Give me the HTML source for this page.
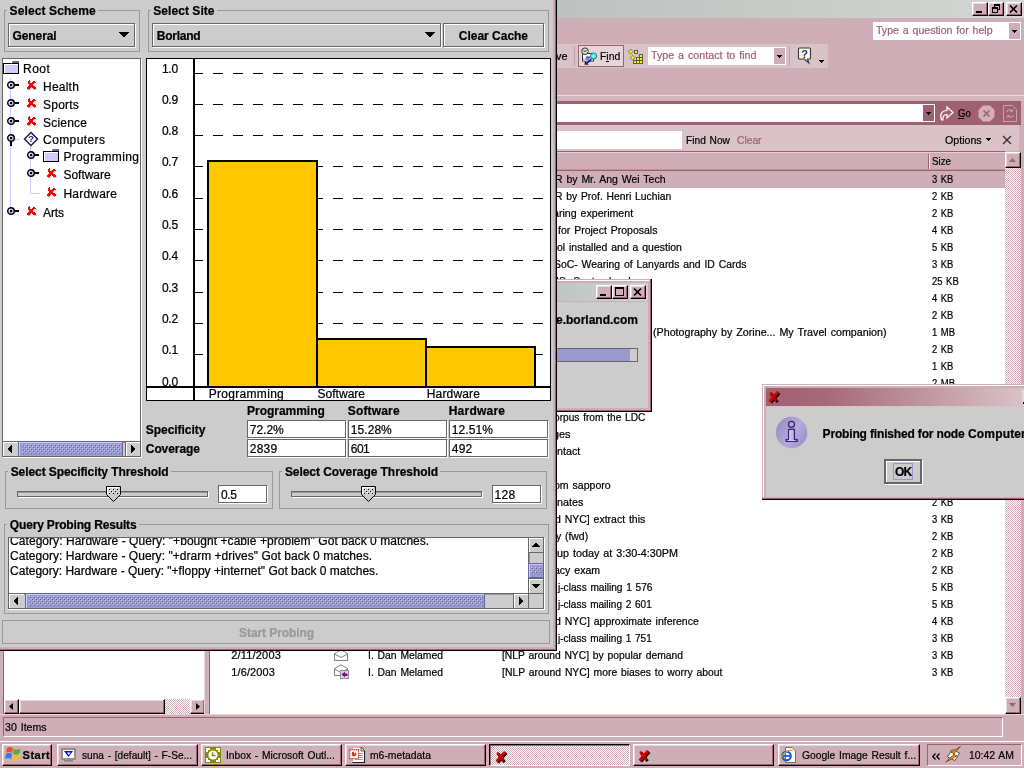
<!DOCTYPE html>
<html><head><meta charset="utf-8"><title>screen</title><style>html,body{margin:0;padding:0;width:1024px;height:768px;overflow:hidden;background:#fff}body{font-family:"Liberation Sans",sans-serif;font-size:12px;color:#000;position:relative}div,svg{position:absolute;white-space:nowrap}svg{overflow:visible;display:block}#scr{-webkit-text-stroke:0.22px currentColor}</style></head><body><div id="scr" style="left:0;top:0;width:1024px;height:768px;overflow:hidden;will-change:transform"><div id="ol" style="left:0;top:0;width:1024px;height:768px;overflow:hidden"><div style="left:0px;top:0px;width:1024px;height:741px;background:#cfafb7;"></div><div style="left:0px;top:0px;width:1024px;height:18px;background:#c6cac7;background:linear-gradient(90deg,#a0a4a2 0,#bcc2bf 557px,#d3d6d3 1024px);"></div><div style="left:972px;top:2px;width:16px;height:14px;background:#cfafb7;box-sizing:border-box;border:1px solid;border-color:#fff #000 #000 #fff;box-shadow:inset -1px -1px 0 #9f6070,inset 1px 1px 0 #e7d7db;"></div><div style="left:976px;top:11px;width:6px;height:2px;background:#000;"></div><div style="left:988px;top:2px;width:16px;height:14px;background:#cfafb7;box-sizing:border-box;border:1px solid;border-color:#fff #000 #000 #fff;box-shadow:inset -1px -1px 0 #9f6070,inset 1px 1px 0 #e7d7db;"></div><div style="left:994px;top:4px;width:6px;height:6px;background:transparent;box-sizing:border-box;border:1px solid #000;border-top-width:2px;"></div><div style="left:992px;top:7px;width:6px;height:6px;background:#cfafb7;box-sizing:border-box;border:1px solid #000;border-top-width:2px;"></div><div style="left:1006px;top:2px;width:16px;height:14px;background:#cfafb7;box-sizing:border-box;border:1px solid;border-color:#fff #000 #000 #fff;box-shadow:inset -1px -1px 0 #9f6070,inset 1px 1px 0 #e7d7db;"></div><svg style="left:1009px;top:4px" width="10" height="10"><path d="M1,1.5 L8,8.5 M8,1.5 L1,8.5" stroke="#000" stroke-width="1.7" fill="none"/></svg><div style="left:873px;top:22px;width:148px;height:18px;background:#fff;"></div><div style="left:876.1px;top:24px;font-size:11px;line-height:12px;color:#9f6070;word-spacing:1.0px;transform:scaleX(0.9595);transform-origin:0 0;">Type a question for help</div><div style="left:1009px;top:23px;width:11px;height:16px;background:#cfafb7;"></div><div style="left:1012px;top:30px;width:5px;height:1px;background:#000;"></div><div style="left:1013px;top:31px;width:3px;height:1px;background:#000;"></div><div style="left:1014px;top:32px;width:1px;height:1px;background:#000;"></div><div style="left:0px;top:44px;width:828px;height:24px;background:#d9c3c9;border-radius:0 3px 3px 0;"></div><div style="left:541.0px;top:50px;font-size:11px;line-height:12px;word-spacing:1.0px;transform:scaleX(0.9889);transform-origin:0 0;">Move</div><div style="left:574px;top:46px;width:1px;height:20px;background:#c49ba7;"></div><div style="left:578px;top:45px;width:46px;height:22px;background:#e6d6da;box-sizing:border-box;border:1px solid #9f6070;"></div><svg style="left:580px;top:46px" width="20" height="20"><rect x="2.5" y="7.5" width="11" height="7.5" fill="#f4f4f4" stroke="#303030" stroke-width="1"/><rect x="3" y="12" width="10" height="3" fill="#c8c8c8"/><circle cx="5" cy="5.2" r="3.3" fill="#dcdcdc" stroke="#303030" stroke-width="1"/><path d="M3.6,4.2 L5,5.8 L6.6,4" stroke="#202020" stroke-width="0.9" fill="none"/><rect x="3" y="5.6" width="1" height="1" fill="#f0e000"/><rect x="6.2" y="4.6" width="1" height="1" fill="#f0e000"/><path d="M6,11.2 H10.5 M6,13 H9" stroke="#2030c0" stroke-width="1.2"/><path d="M10.5,13 L6.5,16.8 L5.2,15.2 L4.8,18.6 L8.4,18.4 L7.4,17.4 L11.6,14 Z" fill="#0010e0" stroke="#000" stroke-width="0.4"/><circle cx="13.6" cy="10" r="3.1" fill="#38d8e8" stroke="#108090" stroke-width="0.9"/><path d="M11.4,10 H15.8 M13.6,7.6 V12.4" stroke="#e8ffff" stroke-width="0.7"/></svg><div style="left:599.8px;top:50px;font-size:11px;line-height:12px;word-spacing:1.0px;transform:scaleX(0.9483);transform-origin:0 0;">Find</div><div style="left:606px;top:61px;width:3px;height:1px;background:#000;"></div><svg style="left:627px;top:48px" width="18" height="18"><g fill="#f4ec30" stroke="#505038" stroke-width="0.9" shape-rendering="crispEdges"><rect x="12.5" y="6.5" width="3" height="3"/><rect x="12.5" y="9.5" width="3" height="3"/><rect x="12.5" y="12.5" width="3" height="3"/><rect x="9.5" y="9.5" width="3" height="3"/><rect x="9.5" y="12.5" width="3" height="3"/><rect x="6.5" y="12.5" width="3" height="3"/><rect x="7.5" y="2.5" width="3" height="3"/></g><g fill="#f4ec30" stroke="#505038" stroke-width="0.7"><polygon points="3.6,1.2 6,3.6 3.6,6 1.2,3.6"/><polygon points="5.5,7.2 7.9,9.6 5.5,12 3.1,9.6"/></g></svg><div style="left:648px;top:47px;width:138px;height:18px;background:#fff;"></div><div style="left:651.1px;top:49px;font-size:11px;line-height:12px;color:#9f6070;word-spacing:1.0px;transform:scaleX(0.9717);transform-origin:0 0;">Type a contact to find</div><div style="left:774px;top:48px;width:11px;height:16px;background:#cfafb7;"></div><div style="left:777px;top:55px;width:5px;height:1px;background:#000;"></div><div style="left:778px;top:56px;width:3px;height:1px;background:#000;"></div><div style="left:779px;top:57px;width:1px;height:1px;background:#000;"></div><div style="left:789px;top:46px;width:1px;height:20px;background:#c49ba7;"></div><svg style="left:797px;top:47px" width="16" height="18"><path d="M2.5,1 H12.5 Q13.5,1 13.5,2 V11 Q13.5,12 12.5,12 H10.5 L11.8,16 L7.5,12 H2.5 Q1.5,12 1.5,11 V2 Q1.5,1 2.5,1 Z" fill="#fbfbd8" stroke="#303838" stroke-width="1.1"/><text x="7.6" y="10.6" font-family="Liberation Sans" font-weight="bold" font-size="11" fill="#2828a8" text-anchor="middle">?</text></svg><div style="left:819px;top:60px;width:5px;height:1px;background:#000;"></div><div style="left:820px;top:61px;width:3px;height:1px;background:#000;"></div><div style="left:821px;top:62px;width:1px;height:1px;background:#000;"></div><div style="left:0px;top:95px;width:1024px;height:1px;background:#ebdfe2;"></div><div style="left:0px;top:96px;width:1024px;height:5px;background:#d3b6bd;"></div><div style="left:0px;top:101px;width:1021px;height:24px;background:#9f6070;"></div><div style="left:0px;top:104px;width:935px;height:18px;background:#fff;"></div><div style="left:923px;top:105px;width:11px;height:16px;background:#9f6070;"></div><div style="left:926px;top:112px;width:5px;height:1px;background:#000;"></div><div style="left:927px;top:113px;width:3px;height:1px;background:#000;"></div><div style="left:928px;top:114px;width:1px;height:1px;background:#000;"></div><svg style="left:939px;top:105px" width="16" height="17"><path d="M2.5,15 C0.5,9 3,5.5 8,5.5 V2 L14,7.5 L8,13 V9.5 C5.5,9.5 3.5,10.5 4,15 Z" fill="none" stroke="#fff" stroke-width="1.2"/></svg><div style="left:957.9px;top:107px;font-size:11px;line-height:12px;word-spacing:1.0px;transform:scaleX(0.8681);transform-origin:0 0;">Go</div><div style="left:958px;top:118px;width:6px;height:1px;background:#000;"></div><svg style="left:978px;top:105px" width="17" height="17"><polygon points="5,0.5 12,0.5 16.5,5 16.5,12 12,16.5 5,16.5 0.5,12 0.5,5" fill="#d3b0b9"/><path d="M5.5,5.5 L11.5,11.5 M11.5,5.5 L5.5,11.5" stroke="#9f6070" stroke-width="1.6"/></svg><svg style="left:1003px;top:105px" width="14" height="17"><path d="M0.5,0.5 H9.5 L13.5,4.5 V16.5 H0.5 Z" fill="none" stroke="#c9a0ab" stroke-width="1"/><path d="M4,7 C4,4 9,4 9,6.5 M9,6.5 l-2,-0.5 M9,6.5 l1.5,-2 M10,10 C10,13 5,13 5,10.5 M5,10.5 l2,0.5 M5,10.5 l-1.5,2" stroke="#c9a0ab" stroke-width="1.1" fill="none"/></svg><div style="left:0px;top:125px;width:1019px;height:26px;background:#d9c3c9;"></div><div style="left:0px;top:131px;width:682px;height:18px;background:#fff;"></div><div style="left:685.7px;top:134px;font-size:11px;line-height:12px;word-spacing:1.0px;transform:scaleX(0.9248);transform-origin:0 0;">Find Now</div><div style="left:736.9px;top:134px;font-size:11px;line-height:12px;color:#9f6070;word-spacing:1.0px;transform:scaleX(0.9317);transform-origin:0 0;">Clear</div><div style="left:944.9px;top:134px;font-size:11px;line-height:12px;word-spacing:1.0px;transform:scaleX(0.9678);transform-origin:0 0;">Options</div><div style="left:986px;top:138px;width:5px;height:1px;background:#000;"></div><div style="left:987px;top:139px;width:3px;height:1px;background:#000;"></div><div style="left:988px;top:140px;width:1px;height:1px;background:#000;"></div><svg style="left:1002px;top:135px" width="10" height="10"><path d="M1,1 L9,9 M9,1 L1,9" stroke="#303030" stroke-width="1.3" fill="none"/></svg><div style="left:0px;top:151px;width:1005px;height:1px;background:#9f6070;"></div><div style="left:0px;top:152px;width:1005px;height:18px;background:#cfafb7;"></div><div style="left:0px;top:152px;width:1005px;height:1px;background:#e3cfd4;"></div><div style="left:928px;top:154px;width:1px;height:15px;background:#9f6070;"></div><div style="left:929px;top:154px;width:1px;height:15px;background:#f3e8ea;"></div><div style="left:931.6px;top:155px;font-size:11px;line-height:12px;word-spacing:1.0px;transform:scaleX(0.8876);transform-origin:0 0;">Size</div><div style="left:0px;top:169px;width:1005px;height:1px;background:#c090a0;"></div><div style="left:0px;top:170px;width:1005px;height:1px;background:#9f6070;"></div><div style="left:210px;top:171px;width:795px;height:543px;background:#fff;"></div><div style="left:210px;top:171px;width:795px;height:17px;background:#cfafb7;"></div><div style="left:555.1px;top:173px;font-size:11px;line-height:12px;word-spacing:1.0px;transform:scaleX(0.9534);transform-origin:0 0;">R by Mr. Ang Wei Tech</div><div style="left:931.6px;top:173px;font-size:11px;line-height:12px;word-spacing:1.0px;transform:scaleX(0.8568);transform-origin:0 0;">3 KB</div><div style="left:555.3px;top:190px;font-size:11px;line-height:12px;word-spacing:1.0px;transform:scaleX(0.9380);transform-origin:0 0;">R by Prof. Henri Luchian</div><div style="left:931.6px;top:190px;font-size:11px;line-height:12px;word-spacing:1.0px;transform:scaleX(0.8568);transform-origin:0 0;">2 KB</div><div style="left:553.4px;top:207px;font-size:11px;line-height:12px;word-spacing:1.0px;transform:scaleX(0.9662);transform-origin:0 0;">aring experiment</div><div style="left:931.6px;top:207px;font-size:11px;line-height:12px;word-spacing:1.0px;transform:scaleX(0.8568);transform-origin:0 0;">2 KB</div><div style="left:557.6px;top:224px;font-size:11px;line-height:12px;word-spacing:1.0px;transform:scaleX(0.9548);transform-origin:0 0;">for Project Proposals</div><div style="left:931.6px;top:224px;font-size:11px;line-height:12px;word-spacing:1.0px;transform:scaleX(0.8568);transform-origin:0 0;">4 KB</div><div style="left:557.1px;top:241px;font-size:11px;line-height:12px;word-spacing:1.0px;transform:scaleX(0.9518);transform-origin:0 0;">ol installed and a question</div><div style="left:931.6px;top:241px;font-size:11px;line-height:12px;word-spacing:1.0px;transform:scaleX(0.8568);transform-origin:0 0;">5 KB</div><div style="left:554.1px;top:258px;font-size:11px;line-height:12px;word-spacing:1.0px;transform:scaleX(0.9466);transform-origin:0 0;">SoC- Wearing of Lanyards and ID Cards</div><div style="left:931.6px;top:258px;font-size:11px;line-height:12px;word-spacing:1.0px;transform:scaleX(0.8568);transform-origin:0 0;">3 KB</div><div style="left:556.4px;top:275px;font-size:11px;line-height:12px;word-spacing:1.0px;transform:scaleX(0.9481);transform-origin:0 0;">IS- September I</div><div style="left:931.9px;top:275px;font-size:11px;line-height:12px;word-spacing:1.0px;transform:scaleX(0.8638);transform-origin:0 0;">25 KB</div><div style="left:931.6px;top:292px;font-size:11px;line-height:12px;word-spacing:1.0px;transform:scaleX(0.8568);transform-origin:0 0;">4 KB</div><div style="left:931.6px;top:309px;font-size:11px;line-height:12px;word-spacing:1.0px;transform:scaleX(0.8568);transform-origin:0 0;">2 KB</div><div style="left:653.1px;top:326px;font-size:11px;line-height:12px;word-spacing:1.0px;transform:scaleX(0.9713);transform-origin:0 0;">(Photography by Zorine... My Travel companion)</div><div style="left:931.9px;top:326px;font-size:11px;line-height:12px;word-spacing:1.0px;transform:scaleX(0.8618);transform-origin:0 0;">1 MB</div><div style="left:931.6px;top:343px;font-size:11px;line-height:12px;word-spacing:1.0px;transform:scaleX(0.8568);transform-origin:0 0;">2 KB</div><div style="left:931.6px;top:360px;font-size:11px;line-height:12px;word-spacing:1.0px;transform:scaleX(0.8568);transform-origin:0 0;">1 KB</div><div style="left:931.9px;top:377px;font-size:11px;line-height:12px;word-spacing:1.0px;transform:scaleX(0.8618);transform-origin:0 0;">2 MB</div><div style="left:931.6px;top:394px;font-size:11px;line-height:12px;word-spacing:1.0px;transform:scaleX(0.8568);transform-origin:0 0;">2 KB</div><div style="left:553.9px;top:411px;font-size:11px;line-height:12px;word-spacing:1.0px;transform:scaleX(0.9233);transform-origin:0 0;">orpus from the LDC</div><div style="left:931.6px;top:411px;font-size:11px;line-height:12px;word-spacing:1.0px;transform:scaleX(0.8568);transform-origin:0 0;">3 KB</div><div style="left:552.8px;top:428px;font-size:11px;line-height:12px;word-spacing:1.0px;transform:scaleX(0.9831);transform-origin:0 0;">ges</div><div style="left:931.6px;top:428px;font-size:11px;line-height:12px;word-spacing:1.0px;transform:scaleX(0.8568);transform-origin:0 0;">2 KB</div><div style="left:557.0px;top:445px;font-size:11px;line-height:12px;word-spacing:1.0px;transform:scaleX(0.9749);transform-origin:0 0;">ntact</div><div style="left:931.6px;top:445px;font-size:11px;line-height:12px;word-spacing:1.0px;transform:scaleX(0.8568);transform-origin:0 0;">2 KB</div><div style="left:931.6px;top:462px;font-size:11px;line-height:12px;word-spacing:1.0px;transform:scaleX(0.8568);transform-origin:0 0;">2 KB</div><div style="left:553.6px;top:479px;font-size:11px;line-height:12px;word-spacing:1.0px;transform:scaleX(0.9602);transform-origin:0 0;">om sapporo</div><div style="left:931.6px;top:479px;font-size:11px;line-height:12px;word-spacing:1.0px;transform:scaleX(0.8568);transform-origin:0 0;">2 KB</div><div style="left:557.0px;top:496px;font-size:11px;line-height:12px;word-spacing:1.0px;transform:scaleX(0.9777);transform-origin:0 0;">nates</div><div style="left:931.6px;top:496px;font-size:11px;line-height:12px;word-spacing:1.0px;transform:scaleX(0.8568);transform-origin:0 0;">2 KB</div><div style="left:555.0px;top:513px;font-size:11px;line-height:12px;word-spacing:1.0px;transform:scaleX(0.9531);transform-origin:0 0;">d NYC] extract this</div><div style="left:931.6px;top:513px;font-size:11px;line-height:12px;word-spacing:1.0px;transform:scaleX(0.8568);transform-origin:0 0;">3 KB</div><div style="left:556.2px;top:530px;font-size:11px;line-height:12px;word-spacing:1.0px;transform:scaleX(0.9441);transform-origin:0 0;">y (fwd)</div><div style="left:931.6px;top:530px;font-size:11px;line-height:12px;word-spacing:1.0px;transform:scaleX(0.8568);transform-origin:0 0;">2 KB</div><div style="left:557.1px;top:547px;font-size:11px;line-height:12px;word-spacing:1.0px;transform:scaleX(0.9800);transform-origin:0 0;">up today at 3:30-4:30PM</div><div style="left:931.6px;top:547px;font-size:11px;line-height:12px;word-spacing:1.0px;transform:scaleX(0.8568);transform-origin:0 0;">2 KB</div><div style="left:554.3px;top:564px;font-size:11px;line-height:12px;word-spacing:1.0px;transform:scaleX(0.9574);transform-origin:0 0;">acy exam</div><div style="left:931.6px;top:564px;font-size:11px;line-height:12px;word-spacing:1.0px;transform:scaleX(0.8568);transform-origin:0 0;">2 KB</div><div style="left:558.1px;top:581px;font-size:11px;line-height:12px;word-spacing:1.0px;transform:scaleX(0.9205);transform-origin:0 0;">j-class mailing 1 576</div><div style="left:931.6px;top:581px;font-size:11px;line-height:12px;word-spacing:1.0px;transform:scaleX(0.8568);transform-origin:0 0;">5 KB</div><div style="left:558.1px;top:598px;font-size:11px;line-height:12px;word-spacing:1.0px;transform:scaleX(0.9132);transform-origin:0 0;">j-class mailing 2 601</div><div style="left:931.6px;top:598px;font-size:11px;line-height:12px;word-spacing:1.0px;transform:scaleX(0.8568);transform-origin:0 0;">5 KB</div><div style="left:554.7px;top:615px;font-size:11px;line-height:12px;word-spacing:1.0px;transform:scaleX(0.9567);transform-origin:0 0;">d NYC] approximate inference</div><div style="left:931.6px;top:615px;font-size:11px;line-height:12px;word-spacing:1.0px;transform:scaleX(0.8568);transform-origin:0 0;">4 KB</div><div style="left:558.1px;top:632px;font-size:11px;line-height:12px;word-spacing:1.0px;transform:scaleX(0.9132);transform-origin:0 0;">j-class mailing 1 751</div><div style="left:931.6px;top:632px;font-size:11px;line-height:12px;word-spacing:1.0px;transform:scaleX(0.8568);transform-origin:0 0;">3 KB</div><div style="left:502.1px;top:649px;font-size:11px;line-height:12px;word-spacing:1.0px;transform:scaleX(0.9371);transform-origin:0 0;">[NLP around NYC] by popular demand</div><div style="left:931.6px;top:649px;font-size:11px;line-height:12px;word-spacing:1.0px;transform:scaleX(0.8568);transform-origin:0 0;">3 KB</div><div style="left:502.1px;top:666px;font-size:11px;line-height:12px;word-spacing:1.0px;transform:scaleX(0.9438);transform-origin:0 0;">[NLP around NYC] more biases to worry about</div><div style="left:931.6px;top:666px;font-size:11px;line-height:12px;word-spacing:1.0px;transform:scaleX(0.8568);transform-origin:0 0;">3 KB</div><div style="left:231.3px;top:649px;font-size:11px;line-height:12px;letter-spacing:0.172px;word-spacing:1.0px;">2/11/2003</div><div style="left:367.6px;top:649px;font-size:11px;line-height:12px;word-spacing:1.0px;transform:scaleX(0.9415);transform-origin:0 0;">I. Dan Melamed</div><div style="left:231.3px;top:666px;font-size:11px;line-height:12px;letter-spacing:0.11px;word-spacing:1.0px;">1/6/2003</div><div style="left:367.6px;top:666px;font-size:11px;line-height:12px;word-spacing:1.0px;transform:scaleX(0.9415);transform-origin:0 0;">I. Dan Melamed</div><svg style="left:334px;top:649px" width="14" height="12"><path d="M0.5,4.5 L7,0.8 L13.5,4.5 V11.5 H0.5 Z" fill="#fff" stroke="#808080" stroke-width="1"/><path d="M0.5,5 L7,8.5 L13.5,5" fill="none" stroke="#808080" stroke-width="1"/></svg><svg style="left:334px;top:664px" width="16" height="16"><path d="M0.5,4.5 L7,0.8 L13.5,4.5 V11.5 H0.5 Z" fill="#fff" stroke="#808080" stroke-width="1"/><path d="M0.5,5 L7,8.5 L13.5,5" fill="none" stroke="#808080" stroke-width="1"/><rect x="6.5" y="6.5" width="8" height="8" fill="#d8d8d8" stroke="#909090"/><path d="M7.5,10.5 L11,7.5 V9.5 H13.5 V12 H11 V13.5 Z" fill="#8000a0"/></svg><div style="left:1005px;top:152px;width:16px;height:562px;background:#cfafb7;background:repeating-conic-gradient(#cfafb7 0% 25%,#fff 0% 50%) 0 0/2px 2px;"></div><div style="left:1005px;top:152px;width:16px;height:16px;background:#cfafb7;box-sizing:border-box;border:1px solid;border-color:#fff #000 #000 #fff;box-shadow:inset -1px -1px 0 #9f6070,inset 1px 1px 0 #e7d7db;"></div><svg style="left:1009px;top:158px" width="7" height="4"><polygon points="0,4 3.5,0 7,4" fill="#9f6070"/></svg><div style="left:1005px;top:697px;width:16px;height:17px;background:#cfafb7;box-sizing:border-box;border:1px solid;border-color:#fff #000 #000 #fff;box-shadow:inset -1px -1px 0 #9f6070,inset 1px 1px 0 #e7d7db;"></div><svg style="left:1009px;top:703px" width="7" height="4"><polygon points="0,0 3.5,4 7,0" fill="#9f6070"/></svg><div style="left:0px;top:0px;width:4px;height:741px;background:#cfafb7;"></div><div style="left:4px;top:171px;width:200px;height:543px;background:#fff;"></div><div style="left:3px;top:171px;width:1px;height:543px;background:#9f6070;"></div><div style="left:4px;top:699px;width:200px;height:15px;background:#cfafb7;background:repeating-conic-gradient(#cfafb7 0% 25%,#fff 0% 50%) 0 0/2px 2px;"></div><div style="left:4px;top:699px;width:15px;height:15px;background:#cfafb7;box-sizing:border-box;border:1px solid;border-color:#fff #000 #000 #fff;box-shadow:inset -1px -1px 0 #9f6070,inset 1px 1px 0 #e7d7db;"></div><svg style="left:9px;top:703px" width="4" height="7"><polygon points="4,0 0,3.5 4,7" fill="#000"/></svg><div style="left:19px;top:699px;width:146px;height:15px;background:#cfafb7;box-sizing:border-box;border:1px solid;border-color:#fff #000 #000 #fff;box-shadow:inset -1px -1px 0 #9f6070,inset 1px 1px 0 #e7d7db;"></div><div style="left:190px;top:699px;width:15px;height:15px;background:#cfafb7;box-sizing:border-box;border:1px solid;border-color:#fff #000 #000 #fff;box-shadow:inset -1px -1px 0 #9f6070,inset 1px 1px 0 #e7d7db;"></div><svg style="left:196px;top:703px" width="4" height="7"><polygon points="0,0 4,3.5 0,7" fill="#000"/></svg><div style="left:205px;top:171px;width:5px;height:543px;background:#cfafb7;"></div><div style="left:204px;top:171px;width:1px;height:543px;background:#e7d7db;"></div><div style="left:209px;top:171px;width:1px;height:543px;background:#9f6070;"></div><div style="left:0px;top:714px;width:1024px;height:1px;background:#e7d7db;"></div><div style="left:3px;top:717px;width:1000px;height:20px;background:#cfafb7;box-sizing:border-box;border:1px solid;border-color:#9f6070 #fff #fff #9f6070;"></div><div style="left:4.8px;top:721px;font-size:11px;line-height:12px;word-spacing:1.0px;transform:scaleX(0.9632);transform-origin:0 0;">30 Items</div><div style="left:0px;top:740px;width:1024px;height:28px;background:#cfafb7;"></div><div style="left:0px;top:741px;width:1024px;height:1px;background:#fff;"></div><div style="left:0px;top:740px;width:1024px;height:1px;background:#cfafb7;"></div><div style="left:2px;top:744px;width:50px;height:22px;background:#cfafb7;box-sizing:border-box;border:1px solid;border-color:#fff #000 #000 #fff;box-shadow:inset -1px -1px 0 #9f6070,inset 1px 1px 0 #e7d7db;"></div><svg style="left:5.5px;top:745px" width="16" height="16"><path d="M1,3 C3,1.5 5,1.5 7,3 L6,8 C4,6.5 2,6.5 0,8 Z" fill="#e8502c"/><path d="M8,3.4 C10,5 12,5 14.5,3.4 L13.5,8.4 C11,10 9,10 7,8.4 Z" fill="#58b030"/><path d="M0,9 C2,7.5 4,7.5 6,9 L5,14 C3,12.5 1,12.5 -1,14 Z" fill="#3878e0"/><path d="M7,9.4 C9,11 11,11 13.3,9.4 L12.3,14.4 C10,16 8,16 6,14.4 Z" fill="#f0c020"/></svg><div style="left:22.6px;top:749px;font-size:11px;line-height:12px;font-weight:bold;letter-spacing:0.484px;">Start</div><div style="left:57px;top:744px;width:141px;height:22px;background:#cfafb7;box-sizing:border-box;border:1px solid;border-color:#fff #000 #000 #fff;box-shadow:inset -1px -1px 0 #9f6070,inset 1px 1px 0 #e7d7db;"></div><div style="left:81.6px;top:749px;font-size:11px;line-height:12px;word-spacing:1.0px;transform:scaleX(0.9200);transform-origin:0 0;">suna - [default] - F-Se...</div><svg style="left:61px;top:747px" width="16" height="16"><rect x="1" y="2" width="13" height="10" fill="#fff" stroke="#909090" stroke-width="2"/><polygon points="3,4 12,4 7.5,10" fill="#1010d0"/><polygon points="6,5.5 9.5,5.5 7.7,8" fill="#fff"/><rect x="3" y="13" width="9" height="1.5" fill="#808080"/></svg><div style="left:201px;top:744px;width:141px;height:22px;background:#cfafb7;box-sizing:border-box;border:1px solid;border-color:#fff #000 #000 #fff;box-shadow:inset -1px -1px 0 #9f6070,inset 1px 1px 0 #e7d7db;"></div><div style="left:225.6px;top:749px;font-size:11px;line-height:12px;word-spacing:1.0px;transform:scaleX(0.9319);transform-origin:0 0;">Inbox - Microsoft Outl...</div><svg style="left:205px;top:747px" width="16" height="16"><rect width="16" height="16" fill="#868a08"/><path d="M2,5 V2 H5 M11,2 H14 V5 M14,11 V14 H11 M5,14 H2 V11" stroke="#fff" stroke-width="2" fill="none"/><circle cx="8" cy="8" r="4.6" fill="#fff"/><path d="M7.6,5.2 V8.6 H10.6" stroke="#868a08" stroke-width="1.5" fill="none"/></svg><div style="left:345px;top:744px;width:141px;height:22px;background:#cfafb7;box-sizing:border-box;border:1px solid;border-color:#fff #000 #000 #fff;box-shadow:inset -1px -1px 0 #9f6070,inset 1px 1px 0 #e7d7db;"></div><div style="left:369.6px;top:749px;font-size:11px;line-height:12px;word-spacing:1.0px;transform:scaleX(0.9412);transform-origin:0 0;">m6-metadata</div><svg style="left:349px;top:747px" width="17" height="17"><path d="M3.5,0.5 H12 L15.5,4 V15.5 H3.5 Z" fill="#fff" stroke="#b8b8b8"/><path d="M12,0.5 L15.5,4 V15.5 H3.5" fill="none" stroke="#202020" stroke-width="1.1"/><path d="M12,0.5 V4 H15.5" fill="#e8e8e8" stroke="#404040" stroke-width="0.8"/><path d="M10,6.5 h4 M10,8.5 h4 M10,10.5 h4 M6,12.5 h8" stroke="#a8a8a8"/><rect x="0.6" y="2.6" width="9" height="9" fill="#fff" stroke="#e01808" stroke-width="1.3" stroke-dasharray="1.2 0.8"/><circle cx="5" cy="7" r="2.4" fill="#e03020"/><path d="M5,7 L5,4.4 L7.6,4.4 Z" fill="#fff"/></svg><div style="left:489px;top:744px;width:141px;height:22px;background:#cfafb7;background:repeating-conic-gradient(#cfafb7 0% 25%,#fff 0% 50%) 0 0/2px 2px;box-sizing:border-box;border:1px solid;border-color:#000 #fff #fff #000;box-shadow:inset 1px 1px 0 #9f6070;"></div><svg style="left:495px;top:751px" width="14" height="14"><g transform="translate(1,0.9)" stroke="#000" fill="none"><path d="M10.2,1 L1.8,10.6" stroke-width="3.2"/><path d="M2.4,2 L8.6,10.2" stroke-width="2.7"/></g><g stroke="#b40000" fill="none"><path d="M10.2,1 L1.8,10.6" stroke-width="3.2"/><path d="M2.4,2 L8.6,10.2" stroke-width="2.7"/></g><g stroke="#ee0000" fill="none" stroke-width="1.1"><path d="M9.4,0.8 L1.4,9.8"/><path d="M2.2,1.4 L4.2,4"/></g></svg><div style="left:633px;top:744px;width:141px;height:22px;background:#cfafb7;box-sizing:border-box;border:1px solid;border-color:#fff #000 #000 #fff;box-shadow:inset -1px -1px 0 #9f6070,inset 1px 1px 0 #e7d7db;"></div><svg style="left:638px;top:750px" width="14" height="14"><g transform="translate(1,0.9)" stroke="#000" fill="none"><path d="M10.2,1 L1.8,10.6" stroke-width="3.2"/><path d="M2.4,2 L8.6,10.2" stroke-width="2.7"/></g><g stroke="#b40000" fill="none"><path d="M10.2,1 L1.8,10.6" stroke-width="3.2"/><path d="M2.4,2 L8.6,10.2" stroke-width="2.7"/></g><g stroke="#ee0000" fill="none" stroke-width="1.1"><path d="M9.4,0.8 L1.4,9.8"/><path d="M2.2,1.4 L4.2,4"/></g></svg><div style="left:778px;top:744px;width:142px;height:22px;background:#cfafb7;box-sizing:border-box;border:1px solid;border-color:#fff #000 #000 #fff;box-shadow:inset -1px -1px 0 #9f6070,inset 1px 1px 0 #e7d7db;"></div><div style="left:802.1px;top:749px;font-size:11px;line-height:12px;word-spacing:1.0px;transform:scaleX(0.9373);transform-origin:0 0;">Google Image Result f...</div><svg style="left:780px;top:747px" width="18" height="17"><path d="M5.5,0.5 H12 L15.5,4 V15.5 H5.5 Z" fill="#fffff0" stroke="#707070"/><circle cx="6.5" cy="9" r="4.3" fill="none" stroke="#1060e0" stroke-width="2.2"/><rect x="3" y="8" width="7" height="1.8" fill="#1060e0"/><path d="M0.5,12 C3,5 9,2.5 12.5,3.5" stroke="#e0a020" stroke-width="1.3" fill="none"/></svg><div style="left:927px;top:744px;width:95px;height:22px;background:#cfafb7;box-sizing:border-box;border:1px solid;border-color:#9f6070 #fff #fff #9f6070;"></div><svg style="left:932px;top:753px" width="9" height="7"><path d="M3.5,0.5 L0.8,3.5 L3.5,6.5 M7.5,0.5 L4.8,3.5 L7.5,6.5" stroke="#000" stroke-width="1.3" fill="none"/></svg><svg style="left:945px;top:746px" width="17" height="17"><polygon points="7,3.5 14.5,7 10,14.5 2.5,11" fill="#fff" stroke="#404040" stroke-width="0.9"/><polygon points="15.5,0.5 6,6.2 9.6,7.8 0.8,16 12,9.8 8.4,8.2" fill="#f8a010" stroke="#7a4800" stroke-width="0.9"/></svg><div style="left:969.1px;top:749px;font-size:11px;line-height:12px;word-spacing:1.0px;transform:scaleX(0.9477);transform-origin:0 0;">10:42 AM</div></div><div style="left:400px;top:279px;width:252px;height:133px;background:#000;"></div><div style="left:400px;top:279px;width:251px;height:132px;background:#9f6070;"></div><div style="left:400px;top:279px;width:250px;height:131px;background:#cfafb7;"></div><div style="left:400px;top:280px;width:249px;height:1px;background:#fff;"></div><div style="left:400px;top:283px;width:248px;height:125px;background:#cccccc;"></div><div style="left:400px;top:283px;width:248px;height:18px;background:#c4c9c6;background:linear-gradient(90deg,#a8aca9 0,#c2c7c4 170px,#cfd1cf 248px);"></div><div style="left:400px;top:301px;width:248px;height:1px;background:#cfafb7;"></div><div style="left:596px;top:285px;width:16px;height:14px;background:#cfafb7;box-sizing:border-box;border:1px solid;border-color:#fff #000 #000 #fff;box-shadow:inset -1px -1px 0 #9f6070,inset 1px 1px 0 #e7d7db;"></div><div style="left:600px;top:294px;width:6px;height:2px;background:#000;"></div><div style="left:612px;top:285px;width:16px;height:14px;background:#cfafb7;box-sizing:border-box;border:1px solid;border-color:#fff #000 #000 #fff;box-shadow:inset -1px -1px 0 #9f6070,inset 1px 1px 0 #e7d7db;"></div><div style="left:615px;top:287px;width:9px;height:9px;background:transparent;box-sizing:border-box;border:1px solid #000;border-top-width:2px;"></div><div style="left:630px;top:285px;width:16px;height:14px;background:#cfafb7;box-sizing:border-box;border:1px solid;border-color:#fff #000 #000 #fff;box-shadow:inset -1px -1px 0 #9f6070,inset 1px 1px 0 #e7d7db;"></div><svg style="left:633px;top:287px" width="10" height="10"><path d="M1,1.5 L8,8.5 M8,1.5 L1,8.5" stroke="#000" stroke-width="1.7" fill="none"/></svg><div style="left:400px;top:313px;width:238px;text-align:right;font-size:12px;line-height:14px;font-weight:bold">Probing site code.borland.com</div><div style="left:400px;top:348px;width:238px;height:14px;background:#cccccc;box-sizing:border-box;border:1px solid #666;"></div><div style="left:400px;top:349px;width:230px;height:12px;background:#9999cc;"></div><div style="left:762px;top:384px;width:300px;height:116px;background:#000;"></div><div style="left:762px;top:384px;width:300px;height:115px;background:#9f6070;"></div><div style="left:762px;top:384px;width:300px;height:114px;background:#cfafb7;"></div><div style="left:763px;top:385px;width:300px;height:1px;background:#fff;"></div><div style="left:763px;top:385px;width:1px;height:112px;background:#fff;"></div><div style="left:766px;top:388px;width:296px;height:109px;background:#cccccc;"></div><div style="left:766px;top:388px;width:296px;height:18px;background:#9f6070;background:linear-gradient(90deg,#9f6070 0,#a56a79 60px,#e0ccd1 280px);"></div><div style="left:766px;top:406px;width:296px;height:1px;background:#d9c1c7;"></div><svg style="left:768px;top:391px" width="14" height="14"><g transform="translate(1,0.9)" stroke="#000" fill="none"><path d="M10.2,1 L1.8,10.6" stroke-width="3.2"/><path d="M2.4,2 L8.6,10.2" stroke-width="2.7"/></g><g stroke="#b40000" fill="none"><path d="M10.2,1 L1.8,10.6" stroke-width="3.2"/><path d="M2.4,2 L8.6,10.2" stroke-width="2.7"/></g><g stroke="#ee0000" fill="none" stroke-width="1.1"><path d="M9.4,0.8 L1.4,9.8"/><path d="M2.2,1.4 L4.2,4"/></g></svg><div style="left:1022px;top:390px;width:2px;height:14px;background:#e7d7db;"></div><div style="left:1023px;top:402px;width:1px;height:2px;background:#000;"></div><svg style="left:775px;top:416px" width="33" height="33"><defs><linearGradient id="ig" x1="0" y1="0.2" x2="1" y2="0.8"><stop offset="0" stop-color="#968ac2"/><stop offset="0.55" stop-color="#b6aadc"/><stop offset="1" stop-color="#9a8ec6"/></linearGradient></defs><circle cx="16.6" cy="16.5" r="15.7" fill="url(#ig)"/><circle cx="16.5" cy="8.3" r="3" fill="#b4a8dc" stroke="#3a2070" stroke-width="1.3"/><path d="M13.6,13.3 H19.4 V23.6 H22.2 V25.3 H11.3 V23.6 H13.6 Z" fill="#c4b8e8" stroke="#3a2070" stroke-width="1.3"/><path d="M14.9,14.6 V24 M20.4,24.4 H12.6" stroke="#e4d8ff" stroke-width="0.9" fill="none"/></svg><div style="left:822.6px;top:427px;font-size:12px;line-height:14px;font-weight:bold;letter-spacing:-0.162px;">Probing finished for node</div><div style="left:968.0px;top:427px;font-size:12px;line-height:14px;font-weight:bold;letter-spacing:0.161px;">Computers</div><div style="left:884px;top:459px;width:38px;height:25px;background:#cccccc;box-sizing:border-box;border:1px solid #666;box-shadow:1px 1px 0 #fff;"></div><div style="left:885px;top:460px;width:36px;height:23px;background:#cccccc;box-sizing:border-box;border:1px solid #666;box-shadow:inset 1px 1px 0 #fff;"></div><div style="left:893px;top:463px;width:20px;height:17px;background:transparent;box-sizing:border-box;border:1px solid #9999cc;"></div><div style="left:895.1px;top:465px;font-size:12px;line-height:14px;font-weight:bold;letter-spacing:-1.0px;">OK</div><div id="swing" style="left:0;top:0;width:557px;height:651px;overflow:hidden"><div style="left:0px;top:0px;width:553px;height:647px;background:#cccccc;"></div><div style="left:553px;top:0px;width:2px;height:649px;background:#cfafb7;"></div><div style="left:555px;top:0px;width:1px;height:650px;background:#9f6070;"></div><div style="left:556px;top:0px;width:1px;height:651px;background:#000;"></div><div style="left:0px;top:647px;width:555px;height:2px;background:#cfafb7;"></div><div style="left:0px;top:649px;width:556px;height:1px;background:#9f6070;"></div><div style="left:0px;top:650px;width:557px;height:1px;background:#000;"></div><div style="left:4px;top:10px;width:136px;height:42px;box-sizing:border-box;border:1px solid #999999;"></div><div style="left:7px;top:4px;width:91px;height:14px;background:#cccccc;"></div><div style="left:9.6px;top:4px;font-size:12px;line-height:14px;font-weight:bold;letter-spacing:0.107px;">Select Scheme</div><div style="left:8px;top:23px;width:127px;height:24px;box-sizing:border-box;border:1px solid #666666;background:#cccccc;box-shadow:inset 1px 1px 0 #ffffff,1px 1px 0 #ffffff;"></div><div style="left:12.6px;top:29px;font-size:12px;line-height:14px;font-weight:bold;letter-spacing:-0.117px;">General</div><div style="left:119px;top:32px;width:10px;height:1px;background:#000;"></div><div style="left:120px;top:33px;width:8px;height:1px;background:#000;"></div><div style="left:121px;top:34px;width:6px;height:1px;background:#000;"></div><div style="left:122px;top:35px;width:4px;height:1px;background:#000;"></div><div style="left:123px;top:36px;width:2px;height:1px;background:#000;"></div><div style="left:148px;top:10px;width:401px;height:42px;box-sizing:border-box;border:1px solid #999999;"></div><div style="left:151px;top:4px;width:66px;height:14px;background:#cccccc;"></div><div style="left:153.3px;top:4px;font-size:12px;line-height:14px;font-weight:bold;letter-spacing:0.055px;">Select Site</div><div style="left:152px;top:23px;width:289px;height:24px;box-sizing:border-box;border:1px solid #666666;background:#cccccc;box-shadow:inset 1px 1px 0 #ffffff,1px 1px 0 #ffffff;"></div><div style="left:156.8px;top:29px;font-size:12px;line-height:14px;font-weight:bold;letter-spacing:-0.266px;">Borland</div><div style="left:425px;top:32px;width:10px;height:1px;background:#000;"></div><div style="left:426px;top:33px;width:8px;height:1px;background:#000;"></div><div style="left:427px;top:34px;width:6px;height:1px;background:#000;"></div><div style="left:428px;top:35px;width:4px;height:1px;background:#000;"></div><div style="left:429px;top:36px;width:2px;height:1px;background:#000;"></div><div style="left:443px;top:23px;width:101px;height:24px;box-sizing:border-box;border:1px solid #666666;background:#cccccc;box-shadow:inset 1px 1px 0 #ffffff,1px 1px 0 #ffffff;"></div><div style="left:458.8px;top:29px;font-size:12px;line-height:14px;font-weight:bold;letter-spacing:-0.013px;">Clear Cache</div><div style="left:2px;top:58px;width:139px;height:399px;box-sizing:border-box;border:1px solid #666666;background:#ffffff;box-shadow:1px 1px 0 #ffffff;"></div><div style="left:10px;top:78px;width:1px;height:132px;background:#ccccff;"></div><div style="left:30px;top:146px;width:1px;height:47px;background:#ccccff;"></div><div style="left:30px;top:193px;width:10px;height:1px;background:#ccccff;"></div><div style="left:15px;top:139px;width:5px;height:1px;background:#ccccff;"></div><svg style="left:3px;top:61px" width="16" height="13" shape-rendering="crispEdges"><rect x="0.5" y="2.5" width="15" height="10" fill="#ccccff" stroke="#000"/><polyline points="1.5,11.5 1.5,3.5 14.5,3.5" fill="none" stroke="#fff"/><polygon points="10,0 16,0 16,3 8,3" fill="#666699" shape-rendering="auto"/><rect x="9" y="2" width="7" height="1" fill="#000"/></svg><div style="left:23.1px;top:62px;font-size:12px;line-height:14px;letter-spacing:0.464px;">Root</div><svg style="left:7px;top:81px" width="13" height="13"><circle cx="4" cy="4" r="3.3" fill="#b3b3e6" stroke="#000" stroke-width="1.4"/><circle cx="3.4" cy="3.4" r="1.6" fill="#e0e0ff"/><rect x="3" y="3" width="2" height="2" fill="#000"/><rect x="7.6" y="3" width="4.4" height="2" fill="#000"/></svg><svg style="left:27px;top:80px" width="11" height="11" shape-rendering="crispEdges"><g fill="#a8d0d0" opacity="0.55"><rect x="3" y="1" width="1" height="1"/><rect x="2" y="2" width="1" height="1"/><rect x="3" y="2" width="1" height="1"/><rect x="7" y="2" width="1" height="1"/><rect x="8" y="2" width="1" height="1"/><rect x="2" y="3" width="1" height="1"/><rect x="3" y="3" width="1" height="1"/><rect x="6" y="3" width="1" height="1"/><rect x="7" y="3" width="1" height="1"/><rect x="8" y="3" width="1" height="1"/><rect x="9" y="3" width="1" height="1"/><rect x="2" y="4" width="1" height="1"/><rect x="3" y="4" width="1" height="1"/><rect x="4" y="4" width="1" height="1"/><rect x="5" y="4" width="1" height="1"/><rect x="6" y="4" width="1" height="1"/><rect x="7" y="4" width="1" height="1"/><rect x="3" y="5" width="1" height="1"/><rect x="4" y="5" width="1" height="1"/><rect x="5" y="5" width="1" height="1"/><rect x="6" y="5" width="1" height="1"/><rect x="3" y="6" width="1" height="1"/><rect x="4" y="6" width="1" height="1"/><rect x="5" y="6" width="1" height="1"/><rect x="6" y="6" width="1" height="1"/><rect x="2" y="7" width="1" height="1"/><rect x="3" y="7" width="1" height="1"/><rect x="4" y="7" width="1" height="1"/><rect x="5" y="7" width="1" height="1"/><rect x="6" y="7" width="1" height="1"/><rect x="7" y="7" width="1" height="1"/><rect x="8" y="7" width="1" height="1"/><rect x="1" y="8" width="1" height="1"/><rect x="2" y="8" width="1" height="1"/><rect x="3" y="8" width="1" height="1"/><rect x="4" y="8" width="1" height="1"/><rect x="6" y="8" width="1" height="1"/><rect x="7" y="8" width="1" height="1"/><rect x="8" y="8" width="1" height="1"/><rect x="9" y="8" width="1" height="1"/><rect x="1" y="9" width="1" height="1"/><rect x="2" y="9" width="1" height="1"/><rect x="3" y="9" width="1" height="1"/><rect x="7" y="9" width="1" height="1"/><rect x="8" y="9" width="1" height="1"/><rect x="9" y="9" width="1" height="1"/></g><g fill="#ff0000"><rect x="2" y="0" width="1" height="1"/><rect x="1" y="1" width="1" height="1"/><rect x="2" y="1" width="1" height="1"/><rect x="6" y="1" width="1" height="1"/><rect x="7" y="1" width="1" height="1"/><rect x="1" y="2" width="1" height="1"/><rect x="2" y="2" width="1" height="1"/><rect x="5" y="2" width="1" height="1"/><rect x="6" y="2" width="1" height="1"/><rect x="7" y="2" width="1" height="1"/><rect x="8" y="2" width="1" height="1"/><rect x="1" y="3" width="1" height="1"/><rect x="2" y="3" width="1" height="1"/><rect x="3" y="3" width="1" height="1"/><rect x="4" y="3" width="1" height="1"/><rect x="5" y="3" width="1" height="1"/><rect x="6" y="3" width="1" height="1"/><rect x="2" y="4" width="1" height="1"/><rect x="3" y="4" width="1" height="1"/><rect x="4" y="4" width="1" height="1"/><rect x="5" y="4" width="1" height="1"/><rect x="2" y="5" width="1" height="1"/><rect x="3" y="5" width="1" height="1"/><rect x="4" y="5" width="1" height="1"/><rect x="5" y="5" width="1" height="1"/><rect x="1" y="6" width="1" height="1"/><rect x="2" y="6" width="1" height="1"/><rect x="3" y="6" width="1" height="1"/><rect x="4" y="6" width="1" height="1"/><rect x="5" y="6" width="1" height="1"/><rect x="6" y="6" width="1" height="1"/><rect x="7" y="6" width="1" height="1"/><rect x="0" y="7" width="1" height="1"/><rect x="1" y="7" width="1" height="1"/><rect x="2" y="7" width="1" height="1"/><rect x="3" y="7" width="1" height="1"/><rect x="5" y="7" width="1" height="1"/><rect x="6" y="7" width="1" height="1"/><rect x="7" y="7" width="1" height="1"/><rect x="8" y="7" width="1" height="1"/><rect x="0" y="8" width="1" height="1"/><rect x="1" y="8" width="1" height="1"/><rect x="2" y="8" width="1" height="1"/><rect x="6" y="8" width="1" height="1"/><rect x="7" y="8" width="1" height="1"/><rect x="8" y="8" width="1" height="1"/></g><rect x="1" y="9" width="2" height="1" fill="#ff0000" opacity="0.45"/><rect x="7" y="9" width="1" height="1" fill="#ff0000" opacity="0.45"/></svg><div style="left:43.1px;top:80px;font-size:12px;line-height:14px;letter-spacing:0.212px;">Health</div><svg style="left:7px;top:99px" width="13" height="13"><circle cx="4" cy="4" r="3.3" fill="#b3b3e6" stroke="#000" stroke-width="1.4"/><circle cx="3.4" cy="3.4" r="1.6" fill="#e0e0ff"/><rect x="3" y="3" width="2" height="2" fill="#000"/><rect x="7.6" y="3" width="4.4" height="2" fill="#000"/></svg><svg style="left:27px;top:98px" width="11" height="11" shape-rendering="crispEdges"><g fill="#a8d0d0" opacity="0.55"><rect x="3" y="1" width="1" height="1"/><rect x="2" y="2" width="1" height="1"/><rect x="3" y="2" width="1" height="1"/><rect x="7" y="2" width="1" height="1"/><rect x="8" y="2" width="1" height="1"/><rect x="2" y="3" width="1" height="1"/><rect x="3" y="3" width="1" height="1"/><rect x="6" y="3" width="1" height="1"/><rect x="7" y="3" width="1" height="1"/><rect x="8" y="3" width="1" height="1"/><rect x="9" y="3" width="1" height="1"/><rect x="2" y="4" width="1" height="1"/><rect x="3" y="4" width="1" height="1"/><rect x="4" y="4" width="1" height="1"/><rect x="5" y="4" width="1" height="1"/><rect x="6" y="4" width="1" height="1"/><rect x="7" y="4" width="1" height="1"/><rect x="3" y="5" width="1" height="1"/><rect x="4" y="5" width="1" height="1"/><rect x="5" y="5" width="1" height="1"/><rect x="6" y="5" width="1" height="1"/><rect x="3" y="6" width="1" height="1"/><rect x="4" y="6" width="1" height="1"/><rect x="5" y="6" width="1" height="1"/><rect x="6" y="6" width="1" height="1"/><rect x="2" y="7" width="1" height="1"/><rect x="3" y="7" width="1" height="1"/><rect x="4" y="7" width="1" height="1"/><rect x="5" y="7" width="1" height="1"/><rect x="6" y="7" width="1" height="1"/><rect x="7" y="7" width="1" height="1"/><rect x="8" y="7" width="1" height="1"/><rect x="1" y="8" width="1" height="1"/><rect x="2" y="8" width="1" height="1"/><rect x="3" y="8" width="1" height="1"/><rect x="4" y="8" width="1" height="1"/><rect x="6" y="8" width="1" height="1"/><rect x="7" y="8" width="1" height="1"/><rect x="8" y="8" width="1" height="1"/><rect x="9" y="8" width="1" height="1"/><rect x="1" y="9" width="1" height="1"/><rect x="2" y="9" width="1" height="1"/><rect x="3" y="9" width="1" height="1"/><rect x="7" y="9" width="1" height="1"/><rect x="8" y="9" width="1" height="1"/><rect x="9" y="9" width="1" height="1"/></g><g fill="#ff0000"><rect x="2" y="0" width="1" height="1"/><rect x="1" y="1" width="1" height="1"/><rect x="2" y="1" width="1" height="1"/><rect x="6" y="1" width="1" height="1"/><rect x="7" y="1" width="1" height="1"/><rect x="1" y="2" width="1" height="1"/><rect x="2" y="2" width="1" height="1"/><rect x="5" y="2" width="1" height="1"/><rect x="6" y="2" width="1" height="1"/><rect x="7" y="2" width="1" height="1"/><rect x="8" y="2" width="1" height="1"/><rect x="1" y="3" width="1" height="1"/><rect x="2" y="3" width="1" height="1"/><rect x="3" y="3" width="1" height="1"/><rect x="4" y="3" width="1" height="1"/><rect x="5" y="3" width="1" height="1"/><rect x="6" y="3" width="1" height="1"/><rect x="2" y="4" width="1" height="1"/><rect x="3" y="4" width="1" height="1"/><rect x="4" y="4" width="1" height="1"/><rect x="5" y="4" width="1" height="1"/><rect x="2" y="5" width="1" height="1"/><rect x="3" y="5" width="1" height="1"/><rect x="4" y="5" width="1" height="1"/><rect x="5" y="5" width="1" height="1"/><rect x="1" y="6" width="1" height="1"/><rect x="2" y="6" width="1" height="1"/><rect x="3" y="6" width="1" height="1"/><rect x="4" y="6" width="1" height="1"/><rect x="5" y="6" width="1" height="1"/><rect x="6" y="6" width="1" height="1"/><rect x="7" y="6" width="1" height="1"/><rect x="0" y="7" width="1" height="1"/><rect x="1" y="7" width="1" height="1"/><rect x="2" y="7" width="1" height="1"/><rect x="3" y="7" width="1" height="1"/><rect x="5" y="7" width="1" height="1"/><rect x="6" y="7" width="1" height="1"/><rect x="7" y="7" width="1" height="1"/><rect x="8" y="7" width="1" height="1"/><rect x="0" y="8" width="1" height="1"/><rect x="1" y="8" width="1" height="1"/><rect x="2" y="8" width="1" height="1"/><rect x="6" y="8" width="1" height="1"/><rect x="7" y="8" width="1" height="1"/><rect x="8" y="8" width="1" height="1"/></g><rect x="1" y="9" width="2" height="1" fill="#ff0000" opacity="0.45"/><rect x="7" y="9" width="1" height="1" fill="#ff0000" opacity="0.45"/></svg><div style="left:43.1px;top:98px;font-size:12px;line-height:14px;letter-spacing:0.212px;">Sports</div><svg style="left:7px;top:117px" width="13" height="13"><circle cx="4" cy="4" r="3.3" fill="#b3b3e6" stroke="#000" stroke-width="1.4"/><circle cx="3.4" cy="3.4" r="1.6" fill="#e0e0ff"/><rect x="3" y="3" width="2" height="2" fill="#000"/><rect x="7.6" y="3" width="4.4" height="2" fill="#000"/></svg><svg style="left:27px;top:116px" width="11" height="11" shape-rendering="crispEdges"><g fill="#a8d0d0" opacity="0.55"><rect x="3" y="1" width="1" height="1"/><rect x="2" y="2" width="1" height="1"/><rect x="3" y="2" width="1" height="1"/><rect x="7" y="2" width="1" height="1"/><rect x="8" y="2" width="1" height="1"/><rect x="2" y="3" width="1" height="1"/><rect x="3" y="3" width="1" height="1"/><rect x="6" y="3" width="1" height="1"/><rect x="7" y="3" width="1" height="1"/><rect x="8" y="3" width="1" height="1"/><rect x="9" y="3" width="1" height="1"/><rect x="2" y="4" width="1" height="1"/><rect x="3" y="4" width="1" height="1"/><rect x="4" y="4" width="1" height="1"/><rect x="5" y="4" width="1" height="1"/><rect x="6" y="4" width="1" height="1"/><rect x="7" y="4" width="1" height="1"/><rect x="3" y="5" width="1" height="1"/><rect x="4" y="5" width="1" height="1"/><rect x="5" y="5" width="1" height="1"/><rect x="6" y="5" width="1" height="1"/><rect x="3" y="6" width="1" height="1"/><rect x="4" y="6" width="1" height="1"/><rect x="5" y="6" width="1" height="1"/><rect x="6" y="6" width="1" height="1"/><rect x="2" y="7" width="1" height="1"/><rect x="3" y="7" width="1" height="1"/><rect x="4" y="7" width="1" height="1"/><rect x="5" y="7" width="1" height="1"/><rect x="6" y="7" width="1" height="1"/><rect x="7" y="7" width="1" height="1"/><rect x="8" y="7" width="1" height="1"/><rect x="1" y="8" width="1" height="1"/><rect x="2" y="8" width="1" height="1"/><rect x="3" y="8" width="1" height="1"/><rect x="4" y="8" width="1" height="1"/><rect x="6" y="8" width="1" height="1"/><rect x="7" y="8" width="1" height="1"/><rect x="8" y="8" width="1" height="1"/><rect x="9" y="8" width="1" height="1"/><rect x="1" y="9" width="1" height="1"/><rect x="2" y="9" width="1" height="1"/><rect x="3" y="9" width="1" height="1"/><rect x="7" y="9" width="1" height="1"/><rect x="8" y="9" width="1" height="1"/><rect x="9" y="9" width="1" height="1"/></g><g fill="#ff0000"><rect x="2" y="0" width="1" height="1"/><rect x="1" y="1" width="1" height="1"/><rect x="2" y="1" width="1" height="1"/><rect x="6" y="1" width="1" height="1"/><rect x="7" y="1" width="1" height="1"/><rect x="1" y="2" width="1" height="1"/><rect x="2" y="2" width="1" height="1"/><rect x="5" y="2" width="1" height="1"/><rect x="6" y="2" width="1" height="1"/><rect x="7" y="2" width="1" height="1"/><rect x="8" y="2" width="1" height="1"/><rect x="1" y="3" width="1" height="1"/><rect x="2" y="3" width="1" height="1"/><rect x="3" y="3" width="1" height="1"/><rect x="4" y="3" width="1" height="1"/><rect x="5" y="3" width="1" height="1"/><rect x="6" y="3" width="1" height="1"/><rect x="2" y="4" width="1" height="1"/><rect x="3" y="4" width="1" height="1"/><rect x="4" y="4" width="1" height="1"/><rect x="5" y="4" width="1" height="1"/><rect x="2" y="5" width="1" height="1"/><rect x="3" y="5" width="1" height="1"/><rect x="4" y="5" width="1" height="1"/><rect x="5" y="5" width="1" height="1"/><rect x="1" y="6" width="1" height="1"/><rect x="2" y="6" width="1" height="1"/><rect x="3" y="6" width="1" height="1"/><rect x="4" y="6" width="1" height="1"/><rect x="5" y="6" width="1" height="1"/><rect x="6" y="6" width="1" height="1"/><rect x="7" y="6" width="1" height="1"/><rect x="0" y="7" width="1" height="1"/><rect x="1" y="7" width="1" height="1"/><rect x="2" y="7" width="1" height="1"/><rect x="3" y="7" width="1" height="1"/><rect x="5" y="7" width="1" height="1"/><rect x="6" y="7" width="1" height="1"/><rect x="7" y="7" width="1" height="1"/><rect x="8" y="7" width="1" height="1"/><rect x="0" y="8" width="1" height="1"/><rect x="1" y="8" width="1" height="1"/><rect x="2" y="8" width="1" height="1"/><rect x="6" y="8" width="1" height="1"/><rect x="7" y="8" width="1" height="1"/><rect x="8" y="8" width="1" height="1"/></g><rect x="1" y="9" width="2" height="1" fill="#ff0000" opacity="0.45"/><rect x="7" y="9" width="1" height="1" fill="#ff0000" opacity="0.45"/></svg><div style="left:43.1px;top:116px;font-size:12px;line-height:14px;letter-spacing:0.174px;">Science</div><svg style="left:7px;top:134px" width="13" height="13"><circle cx="4" cy="4" r="3.3" fill="#b3b3e6" stroke="#000" stroke-width="1.4"/><circle cx="3.4" cy="3.4" r="1.6" fill="#e0e0ff"/><rect x="3" y="3" width="2" height="2" fill="#000"/><rect x="3" y="7.6" width="2" height="4.4" fill="#000"/></svg><svg style="left:23px;top:131px" width="16" height="16"><polygon points="8,1.5 14.5,8 8,14.5 1.5,8" fill="#fff" stroke="#1c1c60" stroke-width="1.5"/><text x="8.1" y="11.4" font-family="Liberation Sans" font-weight="bold" font-size="9.5" fill="#1c1c60" text-anchor="middle">?</text></svg><div style="left:43.1px;top:133px;font-size:12px;line-height:14px;letter-spacing:0.389px;">Computers</div><svg style="left:27px;top:151px" width="13" height="13"><circle cx="4" cy="4" r="3.3" fill="#b3b3e6" stroke="#000" stroke-width="1.4"/><circle cx="3.4" cy="3.4" r="1.6" fill="#e0e0ff"/><rect x="3" y="3" width="2" height="2" fill="#000"/><rect x="7.6" y="3" width="4.4" height="2" fill="#000"/></svg><svg style="left:43px;top:149px" width="16" height="13" shape-rendering="crispEdges"><rect x="0.5" y="2.5" width="15" height="10" fill="#ccccff" stroke="#000"/><polyline points="1.5,11.5 1.5,3.5 14.5,3.5" fill="none" stroke="#fff"/><polygon points="10,0 16,0 16,3 8,3" fill="#666699" shape-rendering="auto"/><rect x="9" y="2" width="7" height="1" fill="#000"/></svg><div style="left:63.4px;top:150px;font-size:12px;line-height:14px;letter-spacing:0.347px;">Programming</div><svg style="left:27px;top:169px" width="13" height="13"><circle cx="4" cy="4" r="3.3" fill="#b3b3e6" stroke="#000" stroke-width="1.4"/><circle cx="3.4" cy="3.4" r="1.6" fill="#e0e0ff"/><rect x="3" y="3" width="2" height="2" fill="#000"/><rect x="7.6" y="3" width="4.4" height="2" fill="#000"/></svg><svg style="left:47px;top:168px" width="11" height="11" shape-rendering="crispEdges"><g fill="#a8d0d0" opacity="0.55"><rect x="3" y="1" width="1" height="1"/><rect x="2" y="2" width="1" height="1"/><rect x="3" y="2" width="1" height="1"/><rect x="7" y="2" width="1" height="1"/><rect x="8" y="2" width="1" height="1"/><rect x="2" y="3" width="1" height="1"/><rect x="3" y="3" width="1" height="1"/><rect x="6" y="3" width="1" height="1"/><rect x="7" y="3" width="1" height="1"/><rect x="8" y="3" width="1" height="1"/><rect x="9" y="3" width="1" height="1"/><rect x="2" y="4" width="1" height="1"/><rect x="3" y="4" width="1" height="1"/><rect x="4" y="4" width="1" height="1"/><rect x="5" y="4" width="1" height="1"/><rect x="6" y="4" width="1" height="1"/><rect x="7" y="4" width="1" height="1"/><rect x="3" y="5" width="1" height="1"/><rect x="4" y="5" width="1" height="1"/><rect x="5" y="5" width="1" height="1"/><rect x="6" y="5" width="1" height="1"/><rect x="3" y="6" width="1" height="1"/><rect x="4" y="6" width="1" height="1"/><rect x="5" y="6" width="1" height="1"/><rect x="6" y="6" width="1" height="1"/><rect x="2" y="7" width="1" height="1"/><rect x="3" y="7" width="1" height="1"/><rect x="4" y="7" width="1" height="1"/><rect x="5" y="7" width="1" height="1"/><rect x="6" y="7" width="1" height="1"/><rect x="7" y="7" width="1" height="1"/><rect x="8" y="7" width="1" height="1"/><rect x="1" y="8" width="1" height="1"/><rect x="2" y="8" width="1" height="1"/><rect x="3" y="8" width="1" height="1"/><rect x="4" y="8" width="1" height="1"/><rect x="6" y="8" width="1" height="1"/><rect x="7" y="8" width="1" height="1"/><rect x="8" y="8" width="1" height="1"/><rect x="9" y="8" width="1" height="1"/><rect x="1" y="9" width="1" height="1"/><rect x="2" y="9" width="1" height="1"/><rect x="3" y="9" width="1" height="1"/><rect x="7" y="9" width="1" height="1"/><rect x="8" y="9" width="1" height="1"/><rect x="9" y="9" width="1" height="1"/></g><g fill="#ff0000"><rect x="2" y="0" width="1" height="1"/><rect x="1" y="1" width="1" height="1"/><rect x="2" y="1" width="1" height="1"/><rect x="6" y="1" width="1" height="1"/><rect x="7" y="1" width="1" height="1"/><rect x="1" y="2" width="1" height="1"/><rect x="2" y="2" width="1" height="1"/><rect x="5" y="2" width="1" height="1"/><rect x="6" y="2" width="1" height="1"/><rect x="7" y="2" width="1" height="1"/><rect x="8" y="2" width="1" height="1"/><rect x="1" y="3" width="1" height="1"/><rect x="2" y="3" width="1" height="1"/><rect x="3" y="3" width="1" height="1"/><rect x="4" y="3" width="1" height="1"/><rect x="5" y="3" width="1" height="1"/><rect x="6" y="3" width="1" height="1"/><rect x="2" y="4" width="1" height="1"/><rect x="3" y="4" width="1" height="1"/><rect x="4" y="4" width="1" height="1"/><rect x="5" y="4" width="1" height="1"/><rect x="2" y="5" width="1" height="1"/><rect x="3" y="5" width="1" height="1"/><rect x="4" y="5" width="1" height="1"/><rect x="5" y="5" width="1" height="1"/><rect x="1" y="6" width="1" height="1"/><rect x="2" y="6" width="1" height="1"/><rect x="3" y="6" width="1" height="1"/><rect x="4" y="6" width="1" height="1"/><rect x="5" y="6" width="1" height="1"/><rect x="6" y="6" width="1" height="1"/><rect x="7" y="6" width="1" height="1"/><rect x="0" y="7" width="1" height="1"/><rect x="1" y="7" width="1" height="1"/><rect x="2" y="7" width="1" height="1"/><rect x="3" y="7" width="1" height="1"/><rect x="5" y="7" width="1" height="1"/><rect x="6" y="7" width="1" height="1"/><rect x="7" y="7" width="1" height="1"/><rect x="8" y="7" width="1" height="1"/><rect x="0" y="8" width="1" height="1"/><rect x="1" y="8" width="1" height="1"/><rect x="2" y="8" width="1" height="1"/><rect x="6" y="8" width="1" height="1"/><rect x="7" y="8" width="1" height="1"/><rect x="8" y="8" width="1" height="1"/></g><rect x="1" y="9" width="2" height="1" fill="#ff0000" opacity="0.45"/><rect x="7" y="9" width="1" height="1" fill="#ff0000" opacity="0.45"/></svg><div style="left:63.4px;top:168px;font-size:12px;line-height:14px;letter-spacing:-0.008px;">Software</div><svg style="left:47px;top:187px" width="11" height="11" shape-rendering="crispEdges"><g fill="#a8d0d0" opacity="0.55"><rect x="3" y="1" width="1" height="1"/><rect x="2" y="2" width="1" height="1"/><rect x="3" y="2" width="1" height="1"/><rect x="7" y="2" width="1" height="1"/><rect x="8" y="2" width="1" height="1"/><rect x="2" y="3" width="1" height="1"/><rect x="3" y="3" width="1" height="1"/><rect x="6" y="3" width="1" height="1"/><rect x="7" y="3" width="1" height="1"/><rect x="8" y="3" width="1" height="1"/><rect x="9" y="3" width="1" height="1"/><rect x="2" y="4" width="1" height="1"/><rect x="3" y="4" width="1" height="1"/><rect x="4" y="4" width="1" height="1"/><rect x="5" y="4" width="1" height="1"/><rect x="6" y="4" width="1" height="1"/><rect x="7" y="4" width="1" height="1"/><rect x="3" y="5" width="1" height="1"/><rect x="4" y="5" width="1" height="1"/><rect x="5" y="5" width="1" height="1"/><rect x="6" y="5" width="1" height="1"/><rect x="3" y="6" width="1" height="1"/><rect x="4" y="6" width="1" height="1"/><rect x="5" y="6" width="1" height="1"/><rect x="6" y="6" width="1" height="1"/><rect x="2" y="7" width="1" height="1"/><rect x="3" y="7" width="1" height="1"/><rect x="4" y="7" width="1" height="1"/><rect x="5" y="7" width="1" height="1"/><rect x="6" y="7" width="1" height="1"/><rect x="7" y="7" width="1" height="1"/><rect x="8" y="7" width="1" height="1"/><rect x="1" y="8" width="1" height="1"/><rect x="2" y="8" width="1" height="1"/><rect x="3" y="8" width="1" height="1"/><rect x="4" y="8" width="1" height="1"/><rect x="6" y="8" width="1" height="1"/><rect x="7" y="8" width="1" height="1"/><rect x="8" y="8" width="1" height="1"/><rect x="9" y="8" width="1" height="1"/><rect x="1" y="9" width="1" height="1"/><rect x="2" y="9" width="1" height="1"/><rect x="3" y="9" width="1" height="1"/><rect x="7" y="9" width="1" height="1"/><rect x="8" y="9" width="1" height="1"/><rect x="9" y="9" width="1" height="1"/></g><g fill="#ff0000"><rect x="2" y="0" width="1" height="1"/><rect x="1" y="1" width="1" height="1"/><rect x="2" y="1" width="1" height="1"/><rect x="6" y="1" width="1" height="1"/><rect x="7" y="1" width="1" height="1"/><rect x="1" y="2" width="1" height="1"/><rect x="2" y="2" width="1" height="1"/><rect x="5" y="2" width="1" height="1"/><rect x="6" y="2" width="1" height="1"/><rect x="7" y="2" width="1" height="1"/><rect x="8" y="2" width="1" height="1"/><rect x="1" y="3" width="1" height="1"/><rect x="2" y="3" width="1" height="1"/><rect x="3" y="3" width="1" height="1"/><rect x="4" y="3" width="1" height="1"/><rect x="5" y="3" width="1" height="1"/><rect x="6" y="3" width="1" height="1"/><rect x="2" y="4" width="1" height="1"/><rect x="3" y="4" width="1" height="1"/><rect x="4" y="4" width="1" height="1"/><rect x="5" y="4" width="1" height="1"/><rect x="2" y="5" width="1" height="1"/><rect x="3" y="5" width="1" height="1"/><rect x="4" y="5" width="1" height="1"/><rect x="5" y="5" width="1" height="1"/><rect x="1" y="6" width="1" height="1"/><rect x="2" y="6" width="1" height="1"/><rect x="3" y="6" width="1" height="1"/><rect x="4" y="6" width="1" height="1"/><rect x="5" y="6" width="1" height="1"/><rect x="6" y="6" width="1" height="1"/><rect x="7" y="6" width="1" height="1"/><rect x="0" y="7" width="1" height="1"/><rect x="1" y="7" width="1" height="1"/><rect x="2" y="7" width="1" height="1"/><rect x="3" y="7" width="1" height="1"/><rect x="5" y="7" width="1" height="1"/><rect x="6" y="7" width="1" height="1"/><rect x="7" y="7" width="1" height="1"/><rect x="8" y="7" width="1" height="1"/><rect x="0" y="8" width="1" height="1"/><rect x="1" y="8" width="1" height="1"/><rect x="2" y="8" width="1" height="1"/><rect x="6" y="8" width="1" height="1"/><rect x="7" y="8" width="1" height="1"/><rect x="8" y="8" width="1" height="1"/></g><rect x="1" y="9" width="2" height="1" fill="#ff0000" opacity="0.45"/><rect x="7" y="9" width="1" height="1" fill="#ff0000" opacity="0.45"/></svg><div style="left:63.4px;top:187px;font-size:12px;line-height:14px;letter-spacing:0.224px;">Hardware</div><svg style="left:7px;top:207px" width="13" height="13"><circle cx="4" cy="4" r="3.3" fill="#b3b3e6" stroke="#000" stroke-width="1.4"/><circle cx="3.4" cy="3.4" r="1.6" fill="#e0e0ff"/><rect x="3" y="3" width="2" height="2" fill="#000"/><rect x="7.6" y="3" width="4.4" height="2" fill="#000"/></svg><svg style="left:27px;top:206px" width="11" height="11" shape-rendering="crispEdges"><g fill="#a8d0d0" opacity="0.55"><rect x="3" y="1" width="1" height="1"/><rect x="2" y="2" width="1" height="1"/><rect x="3" y="2" width="1" height="1"/><rect x="7" y="2" width="1" height="1"/><rect x="8" y="2" width="1" height="1"/><rect x="2" y="3" width="1" height="1"/><rect x="3" y="3" width="1" height="1"/><rect x="6" y="3" width="1" height="1"/><rect x="7" y="3" width="1" height="1"/><rect x="8" y="3" width="1" height="1"/><rect x="9" y="3" width="1" height="1"/><rect x="2" y="4" width="1" height="1"/><rect x="3" y="4" width="1" height="1"/><rect x="4" y="4" width="1" height="1"/><rect x="5" y="4" width="1" height="1"/><rect x="6" y="4" width="1" height="1"/><rect x="7" y="4" width="1" height="1"/><rect x="3" y="5" width="1" height="1"/><rect x="4" y="5" width="1" height="1"/><rect x="5" y="5" width="1" height="1"/><rect x="6" y="5" width="1" height="1"/><rect x="3" y="6" width="1" height="1"/><rect x="4" y="6" width="1" height="1"/><rect x="5" y="6" width="1" height="1"/><rect x="6" y="6" width="1" height="1"/><rect x="2" y="7" width="1" height="1"/><rect x="3" y="7" width="1" height="1"/><rect x="4" y="7" width="1" height="1"/><rect x="5" y="7" width="1" height="1"/><rect x="6" y="7" width="1" height="1"/><rect x="7" y="7" width="1" height="1"/><rect x="8" y="7" width="1" height="1"/><rect x="1" y="8" width="1" height="1"/><rect x="2" y="8" width="1" height="1"/><rect x="3" y="8" width="1" height="1"/><rect x="4" y="8" width="1" height="1"/><rect x="6" y="8" width="1" height="1"/><rect x="7" y="8" width="1" height="1"/><rect x="8" y="8" width="1" height="1"/><rect x="9" y="8" width="1" height="1"/><rect x="1" y="9" width="1" height="1"/><rect x="2" y="9" width="1" height="1"/><rect x="3" y="9" width="1" height="1"/><rect x="7" y="9" width="1" height="1"/><rect x="8" y="9" width="1" height="1"/><rect x="9" y="9" width="1" height="1"/></g><g fill="#ff0000"><rect x="2" y="0" width="1" height="1"/><rect x="1" y="1" width="1" height="1"/><rect x="2" y="1" width="1" height="1"/><rect x="6" y="1" width="1" height="1"/><rect x="7" y="1" width="1" height="1"/><rect x="1" y="2" width="1" height="1"/><rect x="2" y="2" width="1" height="1"/><rect x="5" y="2" width="1" height="1"/><rect x="6" y="2" width="1" height="1"/><rect x="7" y="2" width="1" height="1"/><rect x="8" y="2" width="1" height="1"/><rect x="1" y="3" width="1" height="1"/><rect x="2" y="3" width="1" height="1"/><rect x="3" y="3" width="1" height="1"/><rect x="4" y="3" width="1" height="1"/><rect x="5" y="3" width="1" height="1"/><rect x="6" y="3" width="1" height="1"/><rect x="2" y="4" width="1" height="1"/><rect x="3" y="4" width="1" height="1"/><rect x="4" y="4" width="1" height="1"/><rect x="5" y="4" width="1" height="1"/><rect x="2" y="5" width="1" height="1"/><rect x="3" y="5" width="1" height="1"/><rect x="4" y="5" width="1" height="1"/><rect x="5" y="5" width="1" height="1"/><rect x="1" y="6" width="1" height="1"/><rect x="2" y="6" width="1" height="1"/><rect x="3" y="6" width="1" height="1"/><rect x="4" y="6" width="1" height="1"/><rect x="5" y="6" width="1" height="1"/><rect x="6" y="6" width="1" height="1"/><rect x="7" y="6" width="1" height="1"/><rect x="0" y="7" width="1" height="1"/><rect x="1" y="7" width="1" height="1"/><rect x="2" y="7" width="1" height="1"/><rect x="3" y="7" width="1" height="1"/><rect x="5" y="7" width="1" height="1"/><rect x="6" y="7" width="1" height="1"/><rect x="7" y="7" width="1" height="1"/><rect x="8" y="7" width="1" height="1"/><rect x="0" y="8" width="1" height="1"/><rect x="1" y="8" width="1" height="1"/><rect x="2" y="8" width="1" height="1"/><rect x="6" y="8" width="1" height="1"/><rect x="7" y="8" width="1" height="1"/><rect x="8" y="8" width="1" height="1"/></g><rect x="1" y="9" width="2" height="1" fill="#ff0000" opacity="0.45"/><rect x="7" y="9" width="1" height="1" fill="#ff0000" opacity="0.45"/></svg><div style="left:43.1px;top:206px;font-size:12px;line-height:14px;letter-spacing:-0.181px;">Arts</div><div style="left:3px;top:441px;width:137px;height:15px;background:#cccccc;"></div><div style="left:3px;top:441px;width:137px;height:1px;background:#666666;"></div><div style="left:3px;top:442px;width:137px;height:1px;background:#999999;"></div><div style="left:3px;top:442px;width:15px;height:14px;background:#cccccc;"></div><div style="left:3px;top:442px;width:15px;height:1px;background:#ffffff;"></div><div style="left:3px;top:442px;width:1px;height:14px;background:#ffffff;"></div><div style="left:8px;top:448px;width:1px;height:2px;background:#000;"></div><div style="left:9px;top:447px;width:1px;height:4px;background:#000;"></div><div style="left:10px;top:446px;width:1px;height:6px;background:#000;"></div><div style="left:11px;top:445px;width:1px;height:8px;background:#000;"></div><div style="left:125px;top:442px;width:15px;height:14px;background:#cccccc;"></div><div style="left:125px;top:442px;width:1px;height:14px;background:#666666;"></div><div style="left:126px;top:442px;width:14px;height:1px;background:#ffffff;"></div><div style="left:126px;top:442px;width:1px;height:14px;background:#ffffff;"></div><div style="left:131px;top:445px;width:1px;height:8px;background:#000;"></div><div style="left:132px;top:446px;width:1px;height:6px;background:#000;"></div><div style="left:133px;top:447px;width:1px;height:4px;background:#000;"></div><div style="left:134px;top:448px;width:1px;height:2px;background:#000;"></div><div style="left:18px;top:441px;width:105px;height:15px;background:#9999cc;box-sizing:border-box;border:1px solid #666699;border-bottom:none;box-shadow:inset 1px 1px 0 #ccccff;"></div><svg style="left:22px;top:444px" width="99" height="10" shape-rendering="crispEdges"><defs><pattern id="b22_444" width="4" height="4" patternUnits="userSpaceOnUse"><rect width="4" height="4" fill="#9999cc"/><rect x="0" y="0" width="1" height="1" fill="#ccccff"/><rect x="2" y="2" width="1" height="1" fill="#ccccff"/><rect x="1" y="1" width="1" height="1" fill="#666699"/><rect x="3" y="3" width="1" height="1" fill="#666699"/></pattern></defs><rect width="99" height="10" fill="url(#b22_444)"/></svg><div style="left:146px;top:58px;width:405px;height:343px;background:#ffffff;box-sizing:border-box;border:1px solid #000;"></div><div style="left:193px;top:73px;width:350px;height:1px;background:repeating-linear-gradient(90deg,#000 0 10px,transparent 10px 20px)"></div><div style="left:193px;top:104px;width:350px;height:1px;background:repeating-linear-gradient(90deg,#000 0 10px,transparent 10px 20px)"></div><div style="left:193px;top:135px;width:350px;height:1px;background:repeating-linear-gradient(90deg,#000 0 10px,transparent 10px 20px)"></div><div style="left:193px;top:166px;width:350px;height:1px;background:repeating-linear-gradient(90deg,#000 0 10px,transparent 10px 20px)"></div><div style="left:193px;top:198px;width:350px;height:1px;background:repeating-linear-gradient(90deg,#000 0 10px,transparent 10px 20px)"></div><div style="left:193px;top:229px;width:350px;height:1px;background:repeating-linear-gradient(90deg,#000 0 10px,transparent 10px 20px)"></div><div style="left:193px;top:260px;width:350px;height:1px;background:repeating-linear-gradient(90deg,#000 0 10px,transparent 10px 20px)"></div><div style="left:193px;top:292px;width:350px;height:1px;background:repeating-linear-gradient(90deg,#000 0 10px,transparent 10px 20px)"></div><div style="left:193px;top:323px;width:350px;height:1px;background:repeating-linear-gradient(90deg,#000 0 10px,transparent 10px 20px)"></div><div style="left:193px;top:354px;width:350px;height:1px;background:repeating-linear-gradient(90deg,#000 0 10px,transparent 10px 20px)"></div><div style="left:161.9px;top:62px;font-size:12px;line-height:14px;letter-spacing:-0.244px;">1.0</div><div style="left:161.9px;top:93px;font-size:12px;line-height:14px;letter-spacing:-0.244px;">0.9</div><div style="left:161.9px;top:124px;font-size:12px;line-height:14px;letter-spacing:-0.244px;">0.8</div><div style="left:161.9px;top:155px;font-size:12px;line-height:14px;letter-spacing:-0.244px;">0.7</div><div style="left:161.9px;top:187px;font-size:12px;line-height:14px;letter-spacing:-0.244px;">0.6</div><div style="left:161.9px;top:218px;font-size:12px;line-height:14px;letter-spacing:-0.244px;">0.5</div><div style="left:161.9px;top:249px;font-size:12px;line-height:14px;letter-spacing:-0.244px;">0.4</div><div style="left:161.9px;top:281px;font-size:12px;line-height:14px;letter-spacing:-0.244px;">0.3</div><div style="left:161.9px;top:312px;font-size:12px;line-height:14px;letter-spacing:-0.244px;">0.2</div><div style="left:161.9px;top:343px;font-size:12px;line-height:14px;letter-spacing:-0.244px;">0.1</div><div style="left:161.9px;top:375px;font-size:12px;line-height:14px;letter-spacing:-0.244px;">0.0</div><div style="left:207px;top:160px;width:111px;height:228px;background:#ffc800;box-sizing:border-box;border:2px solid #000;"></div><div style="left:316px;top:338px;width:111px;height:50px;background:#ffc800;box-sizing:border-box;border:2px solid #000;"></div><div style="left:425px;top:346px;width:111px;height:42px;background:#ffc800;box-sizing:border-box;border:2px solid #000;"></div><div style="left:193px;top:59px;width:2px;height:341px;background:#000;"></div><div style="left:147px;top:386px;width:403px;height:2px;background:#000;"></div><div style="left:147px;top:388px;width:403px;height:12px;overflow:hidden;background:#fff"><div style="left:61.7px;top:-1px;font-size:12px;line-height:14px;letter-spacing:0.307px;">Programming</div><div style="left:170.6px;top:-1px;font-size:12px;line-height:14px;letter-spacing:0.006px;">Software</div><div style="left:279.7px;top:-1px;font-size:12px;line-height:14px;letter-spacing:0.181px;">Hardware</div><div style="left:46px;top:0;width:2px;height:12px;background:#000"></div></div><div style="left:247.1px;top:404px;font-size:12px;line-height:14px;font-weight:bold;letter-spacing:-0.032px;">Programming</div><div style="left:347.8px;top:404px;font-size:12px;line-height:14px;font-weight:bold;letter-spacing:0.159px;">Software</div><div style="left:448.7px;top:404px;font-size:12px;line-height:14px;font-weight:bold;letter-spacing:0.228px;">Hardware</div><div style="left:145.8px;top:423px;font-size:12px;line-height:14px;font-weight:bold;letter-spacing:-0.048px;">Specificity</div><div style="left:145.8px;top:442px;font-size:12px;line-height:14px;font-weight:bold;letter-spacing:-0.086px;">Coverage</div><div style="left:247px;top:420px;width:99px;height:18px;box-sizing:border-box;border:1px solid #666666;background:#ffffff;box-shadow:1px 1px 0 #ffffff;"></div><div style="left:249.8px;top:423px;font-size:12px;line-height:14px;letter-spacing:-0.02px;">72.2%</div><div style="left:348px;top:420px;width:99px;height:18px;box-sizing:border-box;border:1px solid #666666;background:#ffffff;box-shadow:1px 1px 0 #ffffff;"></div><div style="left:350.8px;top:423px;font-size:12px;line-height:14px;letter-spacing:0.059px;">15.28%</div><div style="left:449px;top:420px;width:99px;height:18px;box-sizing:border-box;border:1px solid #666666;background:#ffffff;box-shadow:1px 1px 0 #ffffff;"></div><div style="left:451.8px;top:423px;font-size:12px;line-height:14px;letter-spacing:0.109px;">12.51%</div><div style="left:247px;top:439px;width:99px;height:18px;box-sizing:border-box;border:1px solid #666666;background:#ffffff;box-shadow:1px 1px 0 #ffffff;"></div><div style="left:249.8px;top:442px;font-size:12px;line-height:14px;letter-spacing:0.216px;">2839</div><div style="left:348px;top:439px;width:99px;height:18px;box-sizing:border-box;border:1px solid #666666;background:#ffffff;box-shadow:1px 1px 0 #ffffff;"></div><div style="left:350.8px;top:442px;font-size:12px;line-height:14px;letter-spacing:-0.516px;">601</div><div style="left:449px;top:439px;width:99px;height:18px;box-sizing:border-box;border:1px solid #666666;background:#ffffff;box-shadow:1px 1px 0 #ffffff;"></div><div style="left:451.8px;top:442px;font-size:12px;line-height:14px;letter-spacing:0.234px;">492</div><div style="left:5px;top:471px;width:268px;height:38px;box-sizing:border-box;border:1px solid #999999;"></div><div style="left:8px;top:465px;width:163px;height:14px;background:#cccccc;"></div><div style="left:10.7px;top:465px;font-size:12px;line-height:14px;font-weight:bold;letter-spacing:-0.08px;">Select Specificity Threshold</div><div style="left:17px;top:491px;width:191px;height:6px;background:#cccccc;box-sizing:border-box;border:1px solid #666666;box-shadow:1px 1px 0 #ffffff;"></div><div style="left:18px;top:492px;width:189px;height:1px;background:#999999;"></div><svg style="left:106px;top:486px" width="15" height="16" shape-rendering="crispEdges"><polygon points="0.5,0.5 14.5,0.5 14.5,8.5 7.5,15.5 0.5,8.5" fill="#cccccc" stroke="#000" stroke-width="1" shape-rendering="auto"/><polyline points="1.5,8 1.5,1.5 13,1.5" fill="none" stroke="#fff" stroke-width="1"/><rect x="2" y="2" width="1" height="1" fill="#fff"/><rect x="3" y="3" width="1" height="1" fill="#000"/><rect x="6" y="2" width="1" height="1" fill="#fff"/><rect x="7" y="3" width="1" height="1" fill="#000"/><rect x="10" y="2" width="1" height="1" fill="#fff"/><rect x="11" y="3" width="1" height="1" fill="#000"/><rect x="4" y="4" width="1" height="1" fill="#fff"/><rect x="5" y="5" width="1" height="1" fill="#000"/><rect x="8" y="4" width="1" height="1" fill="#fff"/><rect x="9" y="5" width="1" height="1" fill="#000"/><rect x="2" y="6" width="1" height="1" fill="#fff"/><rect x="3" y="7" width="1" height="1" fill="#000"/><rect x="6" y="6" width="1" height="1" fill="#fff"/><rect x="7" y="7" width="1" height="1" fill="#000"/><rect x="10" y="6" width="1" height="1" fill="#fff"/><rect x="11" y="7" width="1" height="1" fill="#000"/></svg><div style="left:218px;top:485px;width:49px;height:18px;box-sizing:border-box;border:1px solid #666666;background:#ffffff;box-shadow:1px 1px 0 #ffffff;"></div><div style="left:220.9px;top:488px;font-size:12px;line-height:14px;letter-spacing:-0.344px;">0.5</div><div style="left:279px;top:471px;width:268px;height:38px;box-sizing:border-box;border:1px solid #999999;"></div><div style="left:282px;top:465px;width:158px;height:14px;background:#cccccc;"></div><div style="left:284.9px;top:465px;font-size:12px;line-height:14px;font-weight:bold;letter-spacing:-0.063px;">Select Coverage Threshold</div><div style="left:291px;top:491px;width:191px;height:6px;background:#cccccc;box-sizing:border-box;border:1px solid #666666;box-shadow:1px 1px 0 #ffffff;"></div><div style="left:292px;top:492px;width:189px;height:1px;background:#999999;"></div><svg style="left:361px;top:486px" width="15" height="16" shape-rendering="crispEdges"><polygon points="0.5,0.5 14.5,0.5 14.5,8.5 7.5,15.5 0.5,8.5" fill="#cccccc" stroke="#000" stroke-width="1" shape-rendering="auto"/><polyline points="1.5,8 1.5,1.5 13,1.5" fill="none" stroke="#fff" stroke-width="1"/><rect x="2" y="2" width="1" height="1" fill="#fff"/><rect x="3" y="3" width="1" height="1" fill="#000"/><rect x="6" y="2" width="1" height="1" fill="#fff"/><rect x="7" y="3" width="1" height="1" fill="#000"/><rect x="10" y="2" width="1" height="1" fill="#fff"/><rect x="11" y="3" width="1" height="1" fill="#000"/><rect x="4" y="4" width="1" height="1" fill="#fff"/><rect x="5" y="5" width="1" height="1" fill="#000"/><rect x="8" y="4" width="1" height="1" fill="#fff"/><rect x="9" y="5" width="1" height="1" fill="#000"/><rect x="2" y="6" width="1" height="1" fill="#fff"/><rect x="3" y="7" width="1" height="1" fill="#000"/><rect x="6" y="6" width="1" height="1" fill="#fff"/><rect x="7" y="7" width="1" height="1" fill="#000"/><rect x="10" y="6" width="1" height="1" fill="#fff"/><rect x="11" y="7" width="1" height="1" fill="#000"/></svg><div style="left:492px;top:485px;width:49px;height:18px;box-sizing:border-box;border:1px solid #666666;background:#ffffff;box-shadow:1px 1px 0 #ffffff;"></div><div style="left:494.6px;top:488px;font-size:12px;line-height:14px;letter-spacing:0.234px;">128</div><div style="left:4px;top:524px;width:545px;height:90px;box-sizing:border-box;border:1px solid #999999;"></div><div style="left:7px;top:518px;width:132px;height:14px;background:#cccccc;"></div><div style="left:9.8px;top:518px;font-size:12px;line-height:14px;font-weight:bold;letter-spacing:-0.162px;">Query Probing Results</div><div style="left:8px;top:537px;width:536px;height:72px;box-sizing:border-box;border:1px solid #666666;background:#ffffff;box-shadow:1px 1px 0 #ffffff;"></div><div style="left:9px;top:538px;width:519px;height:55px;overflow:hidden"><div style="left:1.1px;top:-4px;font-size:12px;line-height:14px;letter-spacing:0.047px;">Category: Hardware - Query: &quot;+bought +cable +problem&quot; Got back 0 matches.</div><div style="left:1.1px;top:11px;font-size:12px;line-height:14px;letter-spacing:0.032px;">Category: Hardware - Query: &quot;+drarm +drives&quot; Got back 0 matches.</div><div style="left:1.1px;top:26px;font-size:12px;line-height:14px;letter-spacing:-0.006px;">Category: Hardware - Query: &quot;+floppy +internet&quot; Got back 0 matches.</div></div><div style="left:528px;top:538px;width:15px;height:55px;background:#cccccc;"></div><div style="left:528px;top:538px;width:1px;height:55px;background:#666666;"></div><div style="left:529px;top:538px;width:1px;height:55px;background:#999999;"></div><div style="left:529px;top:538px;width:14px;height:15px;background:#cccccc;"></div><div style="left:529px;top:538px;width:14px;height:1px;background:#ffffff;"></div><div style="left:529px;top:538px;width:1px;height:15px;background:#ffffff;"></div><div style="left:528px;top:552px;width:15px;height:1px;background:#666666;"></div><div style="left:535px;top:543px;width:2px;height:1px;background:#000;"></div><div style="left:534px;top:544px;width:4px;height:1px;background:#000;"></div><div style="left:533px;top:545px;width:6px;height:1px;background:#000;"></div><div style="left:532px;top:546px;width:8px;height:1px;background:#000;"></div><div style="left:529px;top:578px;width:14px;height:15px;background:#cccccc;"></div><div style="left:528px;top:578px;width:15px;height:1px;background:#666666;"></div><div style="left:529px;top:579px;width:14px;height:1px;background:#ffffff;"></div><div style="left:529px;top:579px;width:1px;height:14px;background:#ffffff;"></div><div style="left:532px;top:584px;width:8px;height:1px;background:#000;"></div><div style="left:533px;top:585px;width:6px;height:1px;background:#000;"></div><div style="left:534px;top:586px;width:4px;height:1px;background:#000;"></div><div style="left:535px;top:587px;width:2px;height:1px;background:#000;"></div><div style="left:528px;top:563px;width:15px;height:15px;background:#9999cc;box-sizing:border-box;border:1px solid #666699;border-right:none;box-shadow:inset 1px 1px 0 #ccccff;"></div><svg style="left:531px;top:567px" width="10" height="6" shape-rendering="crispEdges"><defs><pattern id="b531_567" width="4" height="4" patternUnits="userSpaceOnUse"><rect width="4" height="4" fill="#9999cc"/><rect x="0" y="0" width="1" height="1" fill="#ccccff"/><rect x="2" y="2" width="1" height="1" fill="#ccccff"/><rect x="1" y="1" width="1" height="1" fill="#666699"/><rect x="3" y="3" width="1" height="1" fill="#666699"/></pattern></defs><rect width="10" height="6" fill="url(#b531_567)"/></svg><div style="left:9px;top:593px;width:519px;height:15px;background:#cccccc;"></div><div style="left:9px;top:593px;width:519px;height:1px;background:#666666;"></div><div style="left:9px;top:594px;width:519px;height:1px;background:#999999;"></div><div style="left:9px;top:594px;width:15px;height:14px;background:#cccccc;"></div><div style="left:9px;top:594px;width:15px;height:1px;background:#ffffff;"></div><div style="left:9px;top:594px;width:1px;height:14px;background:#ffffff;"></div><div style="left:14px;top:600px;width:1px;height:2px;background:#000;"></div><div style="left:15px;top:599px;width:1px;height:4px;background:#000;"></div><div style="left:16px;top:598px;width:1px;height:6px;background:#000;"></div><div style="left:17px;top:597px;width:1px;height:8px;background:#000;"></div><div style="left:513px;top:594px;width:15px;height:14px;background:#cccccc;"></div><div style="left:513px;top:594px;width:1px;height:14px;background:#666666;"></div><div style="left:514px;top:594px;width:14px;height:1px;background:#ffffff;"></div><div style="left:514px;top:594px;width:1px;height:14px;background:#ffffff;"></div><div style="left:519px;top:597px;width:1px;height:8px;background:#000;"></div><div style="left:520px;top:598px;width:1px;height:6px;background:#000;"></div><div style="left:521px;top:599px;width:1px;height:4px;background:#000;"></div><div style="left:522px;top:600px;width:1px;height:2px;background:#000;"></div><div style="left:25px;top:593px;width:460px;height:15px;background:#9999cc;box-sizing:border-box;border:1px solid #666699;border-bottom:none;box-shadow:inset 1px 1px 0 #ccccff;"></div><svg style="left:29px;top:596px" width="454" height="10" shape-rendering="crispEdges"><defs><pattern id="b29_596" width="4" height="4" patternUnits="userSpaceOnUse"><rect width="4" height="4" fill="#9999cc"/><rect x="0" y="0" width="1" height="1" fill="#ccccff"/><rect x="2" y="2" width="1" height="1" fill="#ccccff"/><rect x="1" y="1" width="1" height="1" fill="#666699"/><rect x="3" y="3" width="1" height="1" fill="#666699"/></pattern></defs><rect width="454" height="10" fill="url(#b29_596)"/></svg><div style="left:528px;top:593px;width:15px;height:15px;background:#cccccc;"></div><div style="left:528px;top:593px;width:1px;height:15px;background:#666666;"></div><div style="left:528px;top:593px;width:15px;height:1px;background:#666666;"></div><div style="left:2px;top:620px;width:548px;height:24px;background:#cccccc;box-sizing:border-box;border:1px solid #999;"></div><div style="left:239.1px;top:626px;font-size:12px;line-height:14px;font-weight:bold;color:#999999;letter-spacing:-0.085px;">Start Probing</div></div></div></body></html>
